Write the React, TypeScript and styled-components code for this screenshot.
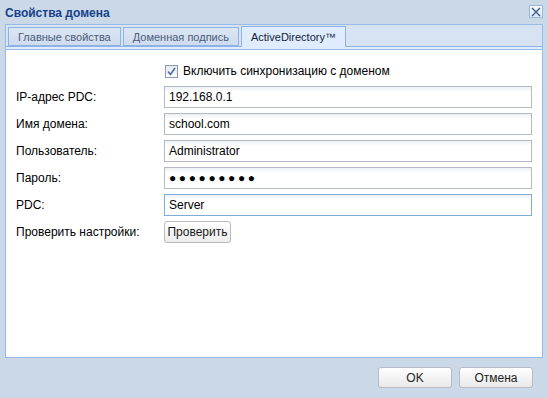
import React, { useState } from 'react';
import styled, { createGlobalStyle } from 'styled-components';

const GlobalStyle = createGlobalStyle`
  html, body {
    margin: 0;
    padding: 0;
    background: #cbd8e8;
  }
  body {
    font-family: "Liberation Sans", Arial, sans-serif;
    font-size: 12px;
  }
`;

const tabs = ['Главные свойства', 'Доменная подпись', 'ActiveDirectory™'];

const fields = [
  { label: 'IP-адрес PDC:', value: '192.168.0.1' },
  { label: 'Имя домена:', value: 'school.com' },
  { label: 'Пользователь:', value: 'Administrator' },
  { label: 'Пароль:', value: '●●●●●●●●●', secret: true },
  { label: 'PDC:', value: 'Server', focused: true },
];

export default function App() {
  const [active, setActive] = useState(2);
  const [sync, setSync] = useState(true);

  return (
    <Window>
      <GlobalStyle />
      <TitleBar>
        <Title>Свойства домена</Title>
        <CloseButton aria-label="close">
          <svg width="10" height="10" viewBox="0 0 10 10">
            <path d="M1 1 L9 9 M9 1 L1 9" stroke="#3f5b86" strokeWidth="1.4" />
          </svg>
        </CloseButton>
      </TitleBar>

      <Panel>
        <TabStrip>
          {tabs.map((t, i) => (
            <Tab key={t} $active={i === active} onClick={() => setActive(i)}>
              {t}
            </Tab>
          ))}
        </TabStrip>
        <TabEdge />

        <Body>
          <CheckRow>
            <Check $checked={sync} onClick={() => setSync(!sync)}>
              {sync && (
                <svg width="9" height="9" viewBox="0 0 9 9">
                  <path d="M1 4.5 L3.5 7.5 L8 1" stroke="#4b6ea6" strokeWidth="1.6" fill="none" />
                </svg>
              )}
            </Check>
            <span>Включить синхронизацию с доменом</span>
          </CheckRow>

          {fields.map((f) => (
            <Row key={f.label}>
              <Label>{f.label}</Label>
              <Field $focused={!!f.focused} $secret={!!f.secret}>
                {f.value}
              </Field>
            </Row>
          ))}

          <Row>
            <Label>Проверить настройки:</Label>
            <SmallButton>Проверить</SmallButton>
          </Row>
        </Body>
      </Panel>

      <Footer>
        <FooterButton>OK</FooterButton>
        <FooterButton>Отмена</FooterButton>
      </Footer>
    </Window>
  );
}

const Window = styled.div`
  width: 548px;
  height: 398px;
  display: flex;
  flex-direction: column;
  background: #cbd8e8;
  box-sizing: border-box;
`;

const TitleBar = styled.div`
  height: 23px;
  display: flex;
  align-items: center;
  justify-content: space-between;
  padding: 0 5px 0 5px;
`;

const Title = styled.div`
  font-weight: bold;
  font-size: 12px;
  color: #15428b;
  margin-top: 2px;
`;

const CloseButton = styled.div`
  width: 12px;
  height: 11px;
  border: 1px solid #9fb6d4;
  background: linear-gradient(#f4f8fd, #dde8f5);
  display: flex;
  align-items: center;
  justify-content: center;
`;

const Panel = styled.div`
  margin: 1px 5px 0 5px;
  display: flex;
  flex-direction: column;
  flex: 1;
`;

const TabStrip = styled.div`
  height: 21px;
  display: flex;
  gap: 2px;
  align-items: flex-end;
  padding-left: 2px;
  background: #d7e3f2;
  border: 1px solid #99bbe8;
  border-bottom: none;
`;

const Tab = styled.div<{ $active: boolean }>`
  height: ${(p) => (p.$active ? '21px' : '19px')};
  margin-bottom: ${(p) => (p.$active ? '-1px' : '0')};
  box-sizing: border-box;
  padding: 0 9px;
  display: flex;
  align-items: center;
  border: 1px solid #8db2e3;
  border-bottom: ${(p) => (p.$active ? 'none' : '1px solid #8db2e3')};
  background: ${(p) => (p.$active ? '#deecfd' : 'linear-gradient(#dbe6f4, #cfdcef)')};
  color: ${(p) => (p.$active ? '#15233a' : '#4a5c78')};
  font-size: 11px;
  cursor: pointer;
  position: relative;
  z-index: ${(p) => (p.$active ? 1 : 0)};
`;

const TabEdge = styled.div`
  height: 2px;
  background: #deecfd;
  border-top: 1px solid #8db2e3;
  border-left: 1px solid #99bbe8;
  border-right: 1px solid #99bbe8;
`;

const Body = styled.div`
  flex: 1;
  background: #fff;
  border: 1px solid #99bbe8;
  padding: 12px 10px 0 10px;
  color: #000;
`;

const CheckRow = styled.div`
  height: 24px;
  display: flex;
  align-items: flex-start;
  padding-left: 149px;
  gap: 5px;
  font-size: 12px;
  line-height: 15px;
  padding-top: 2px;
  box-sizing: border-box;
`;

const Check = styled.div<{ $checked: boolean }>`
  width: 11px;
  height: 11px;
  margin-top: 1px;
  border: 1px solid #8f9cad;
  background: linear-gradient(#e6e9ee, #fbfbfc);
  display: flex;
  align-items: center;
  justify-content: center;
`;

const Row = styled.div`
  height: 27px;
  display: flex;
  align-items: flex-start;
`;

const Label = styled.div`
  width: 148px;
  flex: none;
  height: 22px;
  line-height: 22px;
  font-size: 12px;
`;

const Field = styled.div<{ $focused: boolean; $secret: boolean }>`
  width: 368px;
  height: 22px;
  box-sizing: border-box;
  border: 1px solid ${(p) => (p.$focused ? '#7eadd9' : '#b5b8c8')};
  background: linear-gradient(#eef0f3, #ffffff 5px);
  padding: 0 4px;
  line-height: 20px;
  font-size: 12px;
  letter-spacing: ${(p) => (p.$secret ? '2.6px' : '0')};
  white-space: nowrap;
`;

const SmallButton = styled.div`
  width: 67px;
  height: 22px;
  box-sizing: border-box;
  border: 1px solid #bbbbbb;
  border-radius: 3px;
  background: linear-gradient(#ffffff, #ececec);
  font-size: 12px;
  display: flex;
  align-items: center;
  justify-content: center;
  color: #1a1a1a;
`;

const Footer = styled.div`
  height: 40px;
  display: flex;
  justify-content: flex-end;
  align-items: flex-start;
  gap: 7px;
  padding: 9px 15px 0 0;
  box-sizing: border-box;
`;

const FooterButton = styled.div`
  width: 74px;
  height: 21px;
  box-sizing: border-box;
  border: 1px solid #b8bcc2;
  border-radius: 3px;
  background: linear-gradient(#ffffff, #e9e9e9);
  font-size: 12px;
  display: flex;
  align-items: center;
  justify-content: center;
  color: #222;
`;
